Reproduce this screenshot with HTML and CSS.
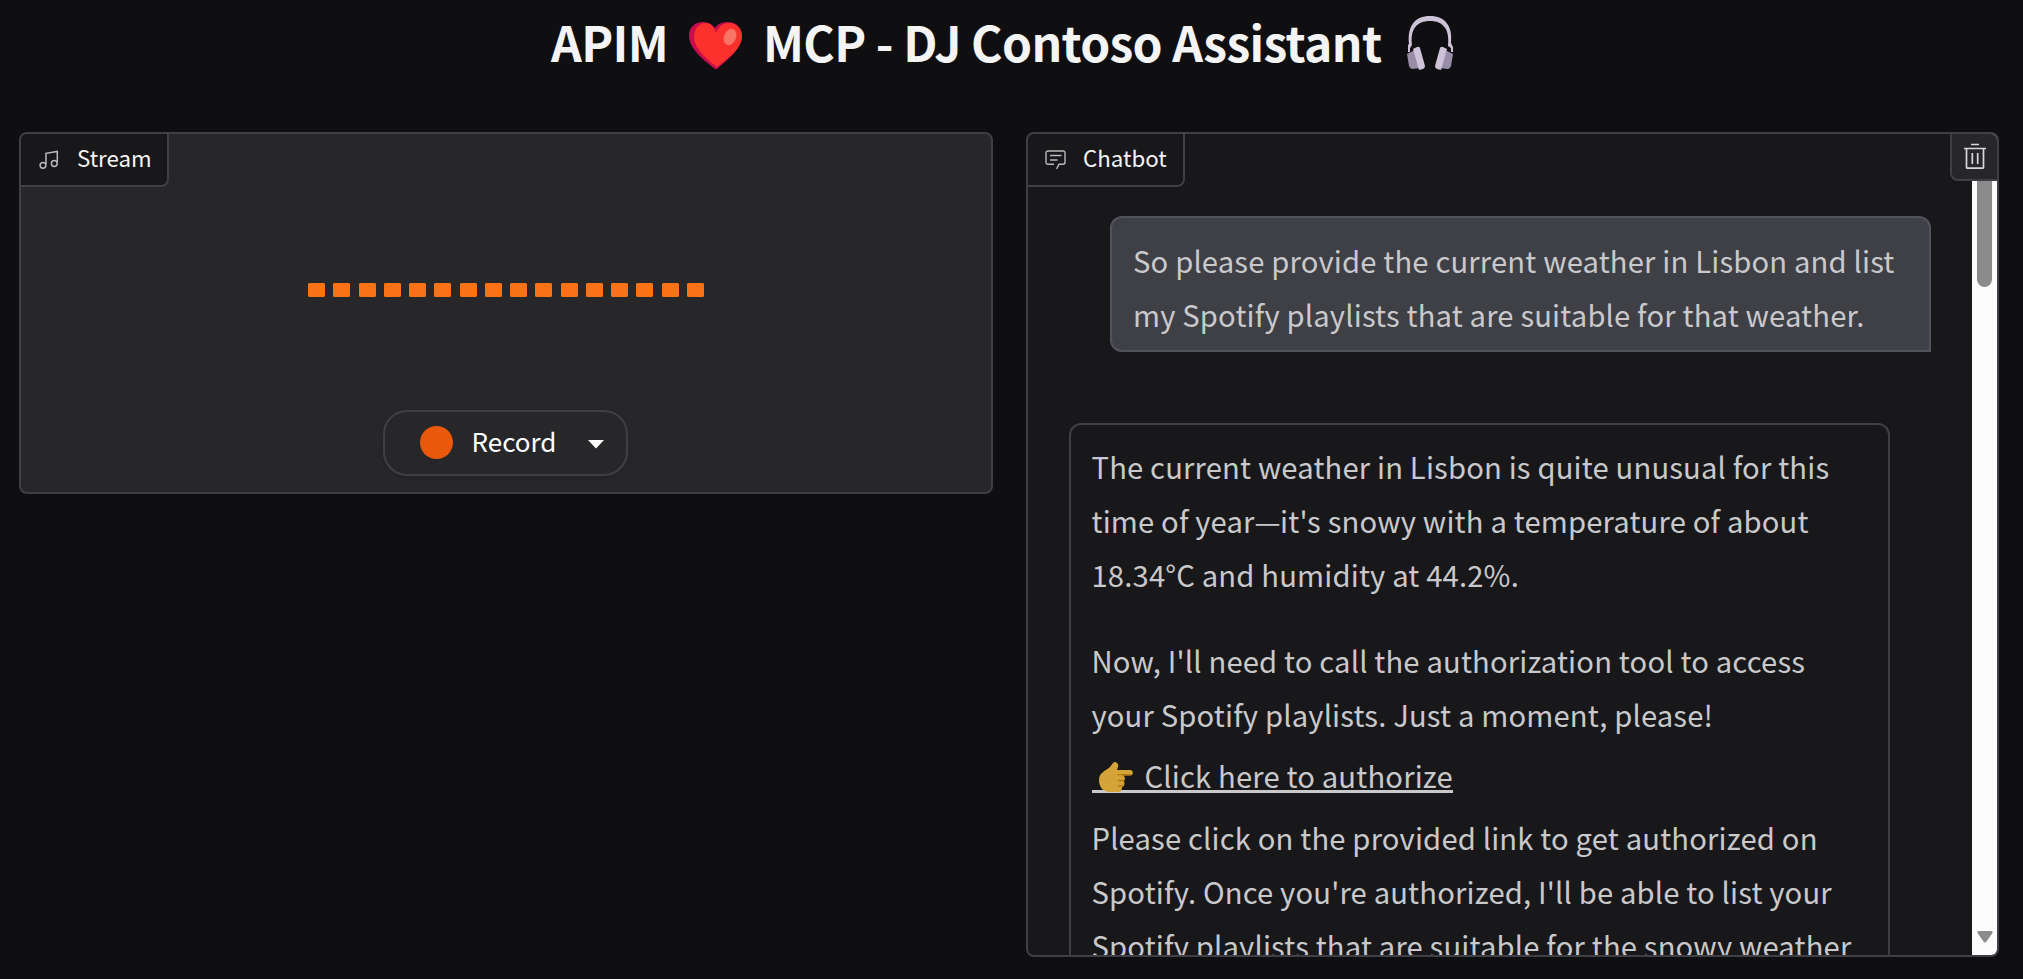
FILE: index.html
```html
<!DOCTYPE html>
<html lang="en">
<head>
<meta charset="utf-8">
<title>DJ Contoso Assistant</title>
<link rel="stylesheet" href="styles.css">
</head>
<body>
<h1 class="title">
  <span class="t1">APIM</span>
  <svg class="heart" viewBox="0 0 53 47"><path fill="#c90d4c" d="M26 47C16 39 0 27 0 14 0 5 6 0 14 0c5 0 9 2 12 6C29 2 33 0 39 0c8 0 14 6 14 14C53 27 37 39 28 47z"/><path fill="#fb312e" d="M28 45C19 38 5 27 5 15 5 7 10 1 17 1c5 0 8 4 10 10C29 5 34 1 40 1c8 0 13 6 13 13C53 27 38 37 28 45z"/><ellipse cx="41" cy="15" rx="6" ry="8.5" transform="rotate(24 41 15)" fill="#f67565"/></svg>
  <span class="t2">MCP - DJ Contoso Assistant</span>
  <svg class="phones" viewBox="0 0 46 54"><path fill="#cdc2d8" d="M2 28C0 10 8 0 23 0s23 10 21 27l2 4v5h-2v-4l-3-2C43 13 36 5 23 5S3 13 5 29l-2 3v4H1v-7z"/><path fill="#998da8" d="M0 38l8-4 6 18-9 1q-2 0-3-3zM46 38l-8-4-6 18 9 1q2 0 3-3z"/><path fill="#cdc2d8" d="M6 33l4-2q2-1 3 1l5 18q0 2-2 3l-4 1zM40 33l-4-2q-2-1-3 1l-5 18q0 2 2 3l4 1z"/></svg>
</h1>
<main class="cols">
  <section class="panel stream">
    <div class="label"><svg class="ico music" viewBox="0 0 20 20" fill="none" stroke="#b9b9bb" stroke-width="1.5"><path d="M7 14V3.3L18.3 1.5V12.500"/><circle cx="4" cy="15.300" r="2.900"/><circle cx="15.300" cy="13.500" r="2.900"/></svg><span>Stream</span></div>
    <div class="bars"><i></i><i></i><i></i><i></i><i></i><i></i><i></i><i></i><i></i><i></i><i></i><i></i><i></i><i></i><i></i><i></i></div>
    <div class="record"><i class="dot"></i><span>Record</span><svg class="caret" viewBox="0 0 16 9"><path fill="#fff" d="M0 0h16L8 8.500z"/></svg></div>
  </section>
  <section class="panel chat">
    <div class="label"><svg class="ico talk" viewBox="0 0 21 20" fill="none" stroke="#b9b9bb" stroke-width="1.400"><path d="M9 14.300H3a2 2 0 0 1-2-2V3a2 2 0 0 1 2-2h15a2 2 0 0 1 2 2v9.300a2 2 0 0 1-2 2h-4L11.500 19M5 5.500h11.500M5 10h7.500"/></svg><span>Chatbot</span></div>
    <div class="view">
      <div class="user"><p>So please provide the current weather in Lisbon and list<br>my Spotify playlists that are suitable for that weather.</p></div>
      <div class="bot">
        <p>The current weather in Lisbon is quite unusual for this<br>time of year<span class="dash">—</span>it's snowy with a temperature of about<br>18.34°C and humidity at 44.2%.</p>
        <p>Now, I'll need to call the authorization tool to access<br>your Spotify playlists. Just a moment, please!</p>
        <p class="linkrow"><a class="link"><svg class="hand" viewBox="0 0 34 30"><path fill="#d5a438" d="M0 18C0 11 6 9 11 5l3-4q2-2 4 0t1 4l-1 3h13a2.700 2.700 0 0 1 0 5.500h-7q2 1 2 3l-1 3q1 2 0 4l-2 2q0 4-3 4.500H11C4 30 0 25 0 18z"/><path fill="none" stroke="#b9780f" stroke-width="1.300" d="M18 12.700h14M19 18.500h6M19 24h5"/></svg><span>Click here to authorize</span></a></p>
        <p>Please click on the provided link to get authorized on<br>Spotify. Once you're authorized, I'll be able to list your<br>Spotify playlists that are suitable for the snowy weather</p>
      </div>
    </div>
    <div class="track"><i class="thumb"></i><svg class="down" viewBox="0 0 16 12"><path fill="#8b8b8b" d="M2 0h12q2 0 1.500 2L9.500 10.500q-1.500 2-3 0L.5 2Q0 0 2 0z"/></svg></div>
    <div class="trash"><svg viewBox="0 0 22 26" fill="none" stroke="#d8d8da" stroke-width="1.700"><path d="M7 1.500h8M0 5.500h22M2.500 5.500V24.200q0 1 1 1h15q1 0 1-1V5.500M8.300 10v11M13.700 10v11"/></svg></div>
  </section>
</main>
</body>
</html>
```
FILE: styles.css
```css
* { box-sizing: border-box; }
body {
  margin: 0;
  height: 979px;
  overflow: hidden;
  background: #0f0f11;
  color: #f4f4f5;
  font-family: "Noto Sans CJK SC", "Open Sans", sans-serif;
}
.title {
  margin: 0;
  height: 132px;
  padding: 6px 0 0 551px;
  display: flex;
  align-items: flex-start;
  font-size: 48px;
  letter-spacing: -.62px;
  line-height: 70px;
  font-weight: 700;
  white-space: nowrap;
}
.t1 { width: 138px; }
.heart { width: 53px; height: 47px; margin-top: 16px; }
.t2 { width: 642px; margin-left: 21px; }
.phones { width: 46px; height: 54px; margin-top: 10px; margin-left: 2px; }
.cols {
  display: flex;
  gap: 33px;
  padding-left: 19px;
  align-items: flex-start;
}
.panel {
  position: relative;
  width: 974px;
  border: 2px solid #3f3f46;
  border-radius: 8px;
  overflow: hidden;
}
.stream {
  height: 362px;
  background: #27272a;
  display: flex;
  flex-direction: column;
  align-items: center;
}
.label {
  align-self: flex-start;
  height: 53px;
  width: 148px;
  padding-left: 19px;
  display: flex;
  align-items: center;
  background: #18181b;
  border: solid #3f3f46;
  border-width: 0 2px 2px 0;
  border-radius: 0 0 8px 0;
  font-size: 22.300px;
  line-height: 46px;
}
.label span { padding-bottom: 5px; }
.ico { width: 20px; height: 20px; margin-right: 17px; }
.music { margin-left: -1px; margin-right: 18px; }
.bars { display: flex; gap: 8.270px; margin: 96px 0 0; }
.bars i { width: 17px; height: 14px; background: #f97316; border-radius: 2px / 1px; }
.record {
  margin-top: 113px;
  margin-right: 2px;
  width: 245px;
  height: 66px;
  padding-left: 35px;
  display: flex;
  align-items: center;
  border: 2px solid #3f3f46;
  border-radius: 24px;
  box-shadow: 0 2px 4px rgba(0, 0, 0, .12);
  font-size: 26px;
  line-height: 58px;
  color: #fff;
}
.dot { width: 33px; height: 33px; border-radius: 50%; background: #ea580c; margin-bottom: 1px; }
.record span { width: 96px; margin-left: 19px; padding-bottom: 4px; }
.caret { width: 16px; height: 9px; margin-left: 20px; margin-top: 3px; }
.chat { width: 973px; height: 825px; background: #18181b; }
.chat .label { width: 157px; padding-left: 17px; }
.chat .ico { width: 21px; }
.view {
  padding: 29px 0 0 41px;
  color: #c9c9cb;
  font-size: 29.200px;
  letter-spacing: .17px;
  line-height: 54px;
  white-space: nowrap;
}
.view p { margin: 0 0 32px; }
.user {
  margin-left: 41px;
  width: 821px;
  height: 136px;
  padding: 15px 21px;
  background: #3f3f46;
  border: 2px solid #52525b;
  border-radius: 12px 12px 0 12px;
}
.bot {
  width: 821px;
  height: 600px;
  margin-top: 71px;
  padding: 14px 20.500px;
  border: 2px solid #3f3f46;
  border-radius: 12px;
}
.dash { display: inline-block; width: 25.500px; }
.view .linkrow { display: flex; align-items: flex-start; height: 53px; margin: -24px 0 8px; }
.link {
  display: flex;
  align-items: flex-end;
  height: 44px;
  border-bottom: 3px solid #c9c9cb;
  line-height: 29px;
}
.hand { width: 34px; height: 30px; margin: 0 12px -2px 7px; }
.track {
  position: absolute;
  right: 0;
  top: 0;
  width: 25px;
  height: 100%;
  background: #fcfcfc;
}
.thumb { position: absolute; left: 5px; top: 20px; width: 15px; height: 133px; border-radius: 8px; background: #8b8b8b; }
.down { position: absolute; left: 5px; bottom: 12px; width: 16px; height: 12px; }
.trash {
  position: absolute;
  top: 0;
  right: 0;
  width: 47px;
  height: 47px;
  padding: 9px 0 0 12px;
  background: #27272a;
  border: solid #3f3f46;
  border-width: 0 0 2px 2px;
  border-radius: 0 0 0 8px;
}
.trash svg { width: 22px; height: 26px; display: block; }
```
